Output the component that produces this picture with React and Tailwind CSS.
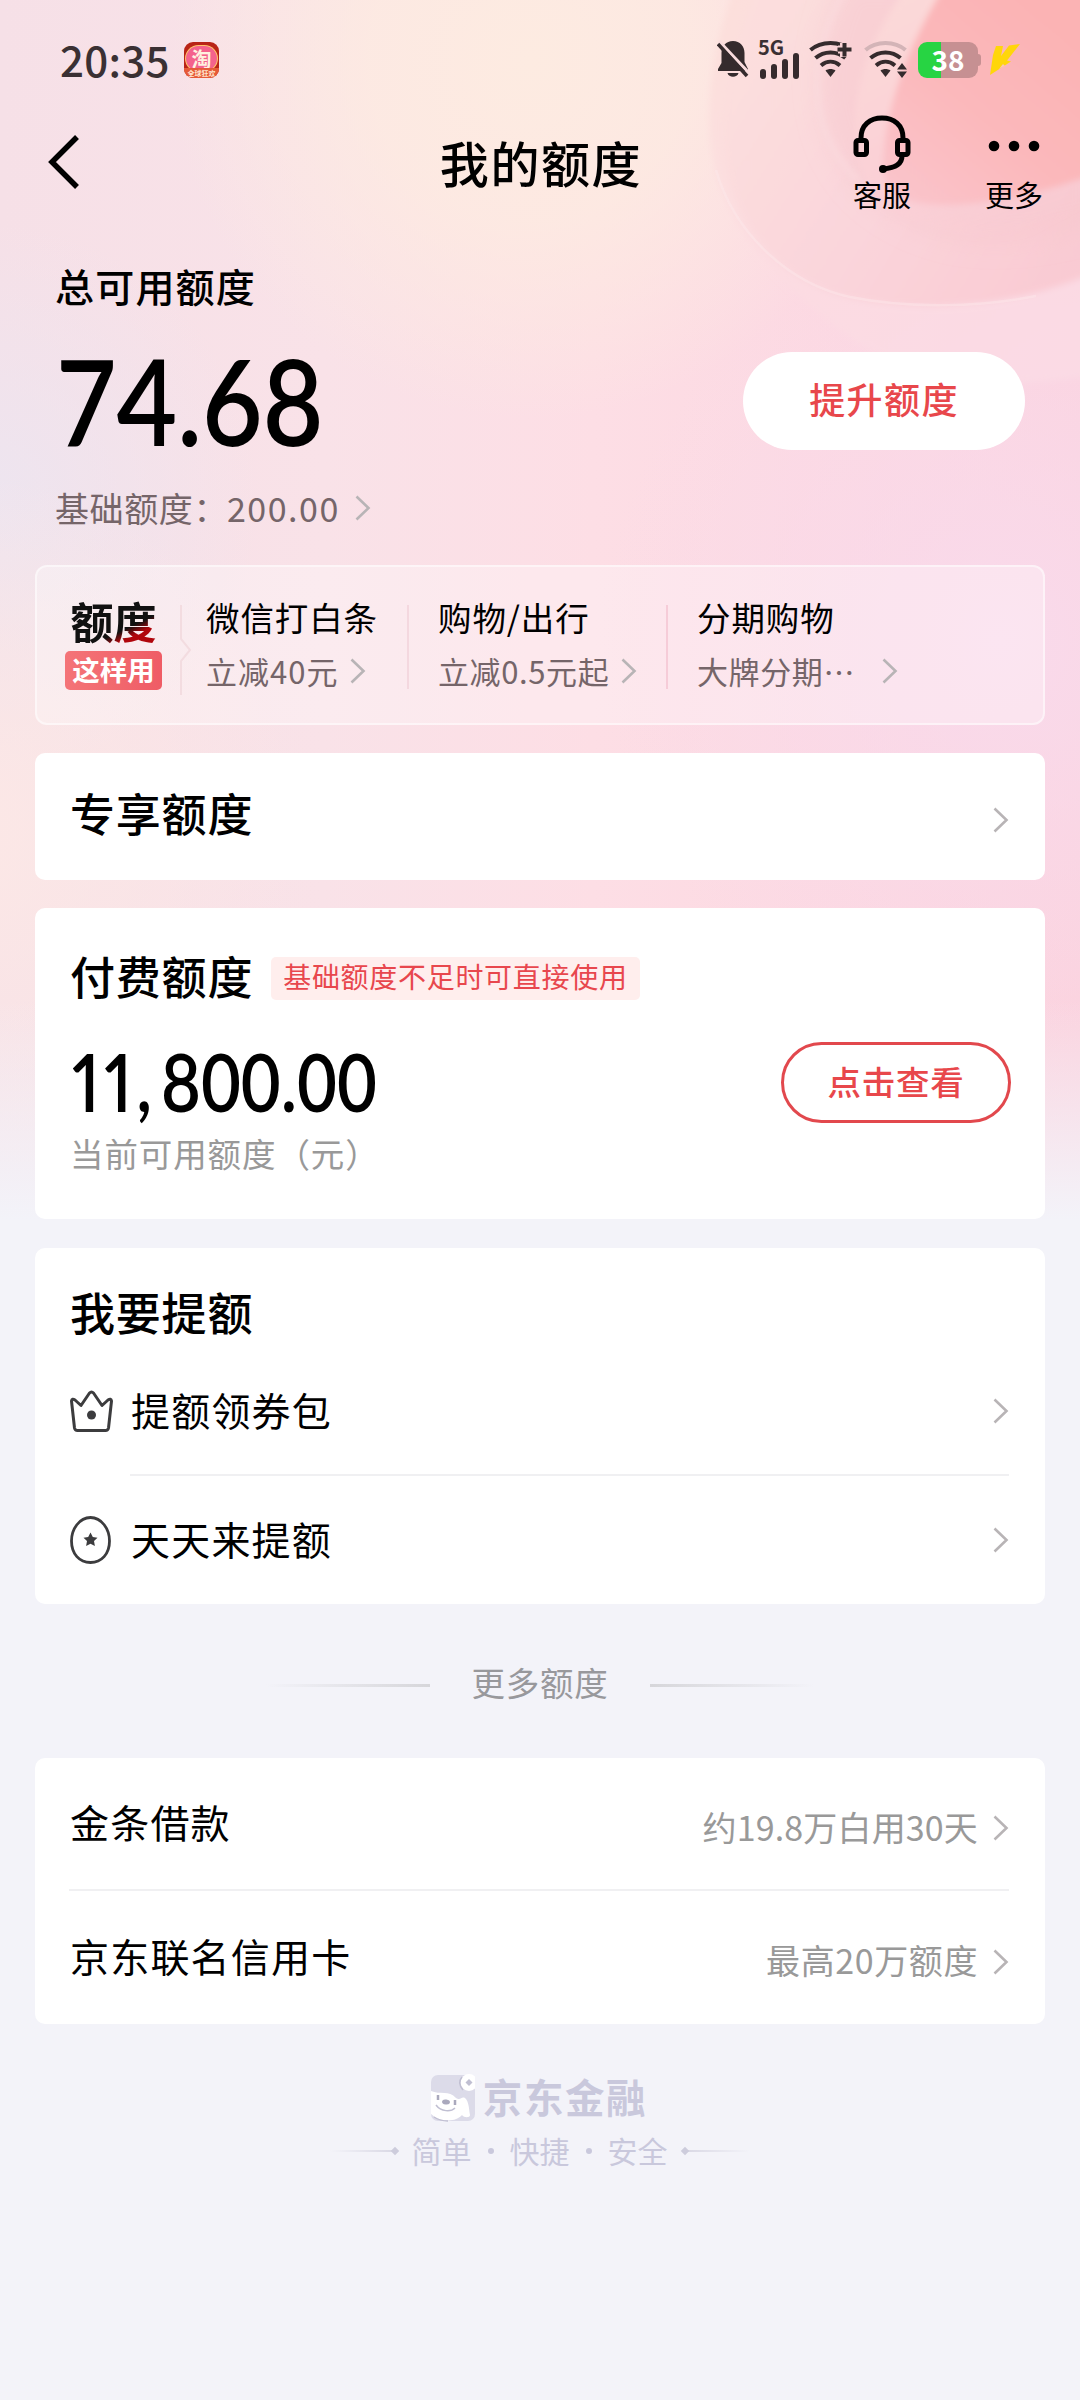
import React from "react";

function Chevron({ className = "" }) {
  return (
    <svg viewBox="0 0 16 26" fill="none" strokeWidth="2.6" className={"h-[26px] w-4 shrink-0 stroke-[#b8b4b6] " + className}>
      <path d="M1.5 1.5L13.5 13L1.5 24.5" />
    </svg>
  );
}

function Backdrop() {
  return (
    <svg className="absolute inset-0 h-[1250px] w-[1080px]" viewBox="0 0 1080 1250" fill="none" aria-hidden="true">
      <defs>
        <radialGradient id="cream" gradientUnits="userSpaceOnUse" cx="530" cy="60" r="360">
          <stop offset="0" stopColor="#fdebe1" />
          <stop offset="0.45" stopColor="#fdebe1" stopOpacity="0.8" />
          <stop offset="1" stopColor="#fdebe1" stopOpacity="0" />
        </radialGradient>
        <radialGradient id="lavender" gradientUnits="userSpaceOnUse" cx="-20" cy="500" r="280">
          <stop offset="0" stopColor="#ede5f0" />
          <stop offset="1" stopColor="#ede5f0" stopOpacity="0" />
        </radialGradient>
        <radialGradient id="peach" gradientUnits="userSpaceOnUse" cx="-40" cy="830" r="360">
          <stop offset="0" stopColor="#fce8e6" />
          <stop offset="1" stopColor="#fce8e6" stopOpacity="0" />
        </radialGradient>
        <radialGradient id="orchid" gradientUnits="userSpaceOnUse" cx="1000" cy="640" r="400">
          <stop offset="0" stopColor="#f9daeb" />
          <stop offset="1" stopColor="#f9daeb" stopOpacity="0" />
        </radialGradient>
        <linearGradient id="base" x1="0" y1="0" x2="1" y2="0">
          <stop offset="0" stopColor="#f6e0e7" />
          <stop offset="0.3" stopColor="#f9e2e8" />
          <stop offset="0.55" stopColor="#fddee5" />
          <stop offset="1" stopColor="#fbd3df" />
        </linearGradient>
        <linearGradient id="outer" gradientUnits="userSpaceOnUse" x1="720" y1="0" x2="1000" y2="380">
          <stop offset="0" stopColor="#fcddd9" />
          <stop offset="0.5" stopColor="#fcdce1" />
          <stop offset="1" stopColor="#fbdce5" />
        </linearGradient>
        <linearGradient id="shell" gradientUnits="userSpaceOnUse" x1="740" y1="60" x2="1060" y2="260">
          <stop offset="0" stopColor="#fcdedd" />
          <stop offset="0.5" stopColor="#fad3d9" />
          <stop offset="1" stopColor="#f9c6ce" />
        </linearGradient>
        <linearGradient id="rim" gradientUnits="userSpaceOnUse" x1="870" y1="0" x2="1000" y2="250">
          <stop offset="0" stopColor="#fcdbd9" />
          <stop offset="0.6" stopColor="#fbd0d6" />
          <stop offset="1" stopColor="#fad0d9" stopOpacity="0" />
        </linearGradient>
        <linearGradient id="disc" gradientUnits="userSpaceOnUse" x1="1060" y1="20" x2="900" y2="210">
          <stop offset="0" stopColor="#fbb3b4" />
          <stop offset="0.5" stopColor="#fbb8bb" />
          <stop offset="1" stopColor="#fac5cc" />
        </linearGradient>
        <linearGradient id="fade" x1="0" y1="0" x2="0" y2="1">
          <stop offset="0" stopColor="#f3f3f9" stopOpacity="0" />
          <stop offset="1" stopColor="#f3f3f9" />
        </linearGradient>
        <filter id="soft" x="-10%" y="-10%" width="120%" height="120%">
          <feGaussianBlur stdDeviation="3" />
        </filter>
        <filter id="softer" x="-20%" y="-20%" width="140%" height="140%">
          <feGaussianBlur stdDeviation="12" />
        </filter>
      </defs>
      <rect width="1080" height="1250" fill="url(#base)" />
      <rect width="1080" height="1250" fill="url(#cream)" />
      <rect width="1080" height="1250" fill="url(#lavender)" />
      <rect width="1080" height="1250" fill="url(#peach)" />
      <rect width="1080" height="1250" fill="url(#orchid)" />
      <g filter="url(#soft)">
        <path d="M738 -20C712 40 700 120 718 180C740 250 800 300 860 345C930 385 1020 390 1100 374V-20Z" fill="url(#outer)" fillOpacity="0.75" />
        <path d="M760 -20C726 60 714 130 732 190C748 242 790 285 850 298C930 315 1030 303 1100 270V-20Z" fill="url(#shell)" fillOpacity="0.75" />
      </g>
      <path d="M845 -20C790 90 820 210 960 240C1010 246 1050 240 1100 225V-20Z" fill="#f8c8ce" fillOpacity="0.5" filter="url(#softer)" />
      <path d="M845 -10C806 60 806 130 858 180" stroke="#fbdde0" strokeWidth="3" filter="url(#soft)" />
      <g filter="url(#soft)">
        <path d="M912 -20C858 50 838 130 870 190C900 235 1000 250 1100 220V-20Z" fill="url(#rim)" fillOpacity="0.9" />
        <path d="M948 -20C905 50 885 110 883 165C884 195 900 204 945 205C1000 204 1050 190 1100 172V-20Z" fill="url(#disc)" />
      </g>
      <path d="M716 170C735 235 790 284 850 297C910 309 980 307 1036 296" stroke="#fde8ec" strokeOpacity="0.45" strokeWidth="2.500" />
      <rect y="1000" width="1080" height="220" fill="url(#fade)" />
      <rect y="1219" width="1080" height="31" fill="#f3f3f9" />
    </svg>
  );
}

function MutedBell() {
  return (
    <svg viewBox="0 0 32 40" className="h-10 w-8 text-[#352b2d]">
      <path fill="currentColor" d="M16 1C23 1 27.500 6 27.500 13V22L31 29V31H1V29L4.500 23V13C4.500 6 9 1 16 1ZM10.500 33H21.500C20.500 38 11.500 38 10.500 33Z" />
      <path d="M2 1L32 33" stroke="#f9dcdd" strokeWidth="3" />
      <path d="M1 4L30 36" stroke="currentColor" strokeWidth="3.500" />
    </svg>
  );
}

function Wifi({ faded, plus }) {
  return (
    <svg viewBox="0 0 44 40" fill="none" stroke="#352b2d" strokeWidth="4" className="h-10 w-11 overflow-visible">
      <path d="M1.500 10C12 0.500 31 0.500 41.500 10" stroke={faded ? "#d3b4b7" : "#352b2d"} />
      <path d="M6.500 18C15 10.500 28 10.500 36.500 18" />
      <path d="M12 25.500C18 20.500 25 20.500 31 25.500" />
      <path d="M16.500 30.500C19.500 28.500 23.500 28.500 26.500 30.500L21.500 37Z" fill="#352b2d" stroke="none" />
      {plus && <path d="M35 3V17M29 9.500H43" stroke="#f9d2d5" strokeWidth="8" />}
      {plus && <path d="M35.500 3V16.500M28.500 9.500H42.500" />}
      {faded && <path d="M38 23L43 29.500H33ZM38 38L43 31.500H33Z" fill="#352b2d" stroke="none" />}
    </svg>
  );
}

function StatusBar() {
  return (
    <div className="flex h-[120px] items-center pl-[60px] text-[#3a3033]">
      <span className="w-[124px] pb-[2px] text-[42px] leading-[42px] font-medium tracking-[0.300px]">20:35</span>
      <div className="relative flex h-9 w-[35px] flex-col items-center overflow-hidden rounded-[9px] bg-[#b92416]">
        <div className="mt-1 flex h-[25px] w-[31px] items-center justify-center rounded-full bg-[#f4628c] ring-1 ring-[#ffc46a]">
          <span className="text-[20px] leading-5 font-bold text-[#fff1df]">淘</span>
        </div>
        <span className="absolute bottom-0 w-full bg-[#e65a38] text-center text-[7px] leading-[10px] font-bold whitespace-nowrap text-[#ffe6cf]">全球狂欢</span>
      </div>
      <div className="ml-[498px] flex h-10 items-center">
        <MutedBell />
        <div className="relative ml-[9px] h-10 w-[44px]">
          <span className="absolute top-0 left-0 text-[20px] leading-[14px] font-bold">5G</span>
          <div className="flex h-[39px] items-end gap-[5px] pl-[2px]">
            <i className="h-2.5 w-1.5 rounded-sm bg-[#352b2d]" />
            <i className="h-[15px] w-1.5 rounded-sm bg-[#352b2d]" />
            <i className="h-[20px] w-1.5 rounded-sm bg-[#352b2d]" />
            <i className="h-[26px] w-1.5 rounded-sm bg-[#352b2d]" />
          </div>
        </div>
        <div className="ml-[7px]"><Wifi plus /></div>
        <div className="ml-[11px]"><Wifi faded /></div>
        <div className="ml-[10px] flex h-9 w-[60px] items-center justify-center rounded-[9px] bg-[linear-gradient(90deg,#27d443_38%,#c69092_38%)] text-[28px] leading-9 font-bold text-white">
          <span className="-mt-[3px]">38</span>
        </div>
        <i className="h-3 w-[3px] rounded-r-sm bg-[#c69092]" />
        <svg viewBox="0 0 30 32" className="ml-[9px] h-8 w-[30px]" fill="#ffd60a">
          <path d="M6 2H13L11 12L19 1.500L30 0L17 16.500L21 17.500L0 31L3 11Z" />
          <path d="M13 20L9 25L15 22Z" fill="#fbc5b5" />
        </svg>
      </div>
    </div>
  );
}

function NavBar() {
  return (
    <header className="grid h-[120px] grid-cols-3 pl-12">
      <svg viewBox="0 0 32 54" fill="none" stroke="#000" strokeWidth="5.500" className="mt-[15px] h-[54px] w-8">
        <path d="M29 2L4 27L29 52" />
      </svg>
      <h1 className="-ml-[46px] pt-[15px] text-center text-[49px] leading-[54px] font-medium tracking-[1.6px] whitespace-nowrap">我的额度</h1>
      <div className="flex justify-end pr-[36px] text-[29px] leading-[36px]">
        <div className="flex w-[60px] flex-col items-center">
          <svg viewBox="0 0 58 60" fill="none" stroke="#000" strokeWidth="5" className="-mt-[5px] h-[60px] w-[58px]">
            <path d="M8 24V23C8 10 17 3 29 3S50 10 50 23V24" />
            <rect x="3" y="25.500" width="10.500" height="14" rx="2" />
            <rect x="44.500" y="25.500" width="10.500" height="14" rx="2" />
            <path d="M49 41C49 49 42 53 30 54" />
            <circle cx="30" cy="54" r="4" fill="#000" stroke="none" />
          </svg>
          <span className="mt-px whitespace-nowrap">客服</span>
        </div>
        <div className="ml-[72px] flex w-[60px] flex-col items-center">
          <svg viewBox="0 0 52 12" className="mt-5 h-3 w-[52px]">
            <circle cx="6" cy="6" r="5.300" /><circle cx="26" cy="6" r="5.300" /><circle cx="46" cy="6" r="5.300" />
          </svg>
          <span className="mt-[24px] whitespace-nowrap">更多</span>
        </div>
      </div>
    </header>
  );
}

function Summary() {
  return (
    <section className="flex h-[325px] items-start justify-between pr-[55px] pl-[55px]">
      <div className="pt-[25px]">
        <h2 className="h-[46px] text-[39px] leading-[40px] font-medium tracking-[1.2px]">总可用额度</h2>
        <div className="mt-[30px] h-[118px] origin-left scale-x-[0.88] pl-px font-[Lato] text-[119px] leading-[118px] font-semibold">74.68</div>
        <div className="mt-[29px] flex h-[40px] items-center text-[34px] leading-[34px] tracking-[0.6px] text-[#756569]">
          <span>基础额度：</span>
          <span className="-ml-px tracking-[1.500px]">200.00</span>
          <Chevron className="ml-[15px]" />
        </div>
      </div>
      <button className="mt-[112px] h-[98px] w-[282px] rounded-full bg-white pb-1.5 text-[36px] leading-[36px] font-medium tracking-[1.4px] text-[#e8474b]">提升额度</button>
    </section>
  );
}

function Offer({ title, note, className, chevron = "ml-[13px]" }) {
  return (
    <div className={"flex flex-col whitespace-nowrap " + className}>
      <span className="text-[33.500px] leading-[40px] tracking-[0.9px]">{title}</span>
      <span className="mt-[14px] flex items-center text-[31px] leading-[40px] tracking-[0.6px] text-[#756569]">
        {note}
        <Chevron className={chevron} />
      </span>
    </div>
  );
}

function Offers() {
  return (
    <section className="flex h-[160px] rounded-[12px] border-2 border-white/50 bg-white/30 pt-[30px]">
      <div className="ml-[28px] flex w-[97px] flex-col items-center">
        <span className="-mt-px bg-[linear-gradient(155deg,#111_66%,#b0060c_78%)] bg-clip-text text-[43px] leading-[48px] font-bold text-transparent">额度</span>
        <span className="mt-[7px] flex h-[39px] w-full items-center justify-center rounded-[5px] bg-linear-to-r from-[#f47478] to-[#ef5c65] pb-1 text-[27.500px] leading-[30px] font-bold text-white">这样用</span>
      </div>
      <svg viewBox="0 0 12 90" fill="none" stroke="#f3dce0" strokeWidth="2" className="mt-[8px] ml-[18px] h-[90px] w-3">
        <path d="M1 0V34L10 45L1 56V90" />
      </svg>
      <Offer className="ml-[14px] w-[201px]" title="微信打白条" note={<span className="tracking-[1px]">立减40元</span>} chevron="ml-[12px]" />
      <i className="mt-[8px] h-[84px] w-0.5 bg-[#f4d8df]" />
      <Offer className="ml-[29px] w-[228px]" title="购物/出行" note="立减0.5元起" chevron="ml-[12px]" />
      <i className="mt-[8px] h-[84px] w-0.5 bg-[#f6ccd8]" />
      <Offer className="ml-[29px]" title="分期购物" note="大牌分期⋯" chevron="ml-[27px]" />
    </section>
  );
}

function Card({ className = "", children }) {
  return <section className={"rounded-[10px] bg-white " + className}>{children}</section>;
}

function CrownIcon() {
  return (
    <svg viewBox="0 0 44 48" fill="none" stroke="#3c3c3e" strokeWidth="3" strokeLinejoin="round" className="h-12 w-11">
      <path d="M1.500 14Q2 11 5 13L11 18.500L19.500 6Q21.500 4 23.500 6L32 18.500L38 13Q41 11 41.500 14L38.500 41Q38 43.500 35.500 43.500H7.500Q5 43.500 4.500 41Z" />
      <circle cx="21.500" cy="28" r="4.500" fill="#3c3c3e" stroke="none" />
    </svg>
  );
}

function EggIcon() {
  return (
    <svg viewBox="0 0 44 48" fill="none" className="h-12 w-11">
      <path d="M20.500 1.500C31.500 1.500 39.500 13 39.500 25C39.500 38 31.500 46.500 20.500 46.500S1.500 38 1.500 25C1.500 13 9.500 1.500 20.500 1.500Z" stroke="#3c3c3e" strokeWidth="2.800" />
      <path d="M20.500 16.500L22.800 21L27.500 21.700L24 25.100L24.900 30L20.500 27.700L16.100 30L17 25.100L13.500 21.700L18.200 21Z" fill="#3c3c3e" />
    </svg>
  );
}

function RaiseRow({ icon, label, className }) {
  return (
    <div className={"flex items-center " + className}>
      <div className="w-[60px]">{icon}</div>
      <span className="flex-1 pb-[5px] pl-px text-[39px] leading-[44px] tracking-[1.200px]">{label}</span>
      <Chevron />
    </div>
  );
}

function MoreRow({ label, note, className, noteClass }) {
  return (
    <div className={"flex items-center justify-between " + className}>
      <span className="pb-[14px] pl-px text-[39px] leading-[44px] tracking-[1.200px]">{label}</span>
      <div className="flex items-center text-[34px] leading-[40px] text-[#999]">
        <span className={"pb-[3px] " + noteClass}>{note}</span>
        <Chevron className="ml-[15px]" />
      </div>
    </div>
  );
}

function Dot() {
  return <i className="mx-[16px] mt-[2px] size-[6px] rounded-full bg-[#c9c8dc]" />;
}

function Footer() {
  return (
    <footer className="mt-[49px] flex flex-col items-center text-[#c9c8dc]">
      <div className="flex h-[50px] items-center">
        <svg viewBox="0 0 44 48" className="-ml-[2px] h-12 w-11">
          <rect x="0" y="1" width="44" height="46" rx="7" fill="#dcdbe9" />
          <path d="M0 17C9 21 18 16 25 24C30 27 30 22 34 24C38 27 38 36 39 41C39 44 33 44 31 41C26 47 15 48 5 44L0 40Z" fill="#fff" />
          <circle cx="38" cy="8.500" r="8.500" fill="#fff" />
          <path d="M38 5L41.500 8.500L38 12L34.500 8.500Z" fill="#c0bfd2" />
          <path d="M31 3Q26 9 32 16M5 31C10 38 20 38 24 34M3 43Q9 47 17 47" stroke="#c0bfd2" strokeWidth="1.500" fill="none" />
          <path d="M7 21V26M24 26V31" stroke="#aaa9bd" strokeWidth="2.500" />
          <ellipse cx="15" cy="28" rx="4" ry="2.500" fill="#aaa9bd" transform="rotate(8 15 28)" />
        </svg>
        <span className="ml-[8px] pb-[4px] text-[39.500px] leading-[44px] font-bold tracking-[1.600px] whitespace-nowrap">京东金融</span>
      </div>
      <div className="mt-[6px] -ml-px flex h-[44px] items-center">
        <i className="h-[2px] w-[62px] bg-linear-to-r from-transparent to-[#dad9e5]" />
        <i className="size-[6px] rotate-45 bg-[#cdccdc]" />
        <span className="mx-[14px] flex h-[40px] items-center pb-[2px] text-[30px] leading-[40px] whitespace-nowrap">
          <span>简单</span><Dot /><span>快捷</span><Dot /><span>安全</span>
        </span>
        <i className="size-[6px] rotate-45 bg-[#cdccdc]" />
        <i className="h-[2px] w-[62px] bg-linear-to-l from-transparent to-[#dad9e5]" />
      </div>
    </footer>
  );
}

export default function App() {
  return (
    <div className="relative h-[2400px] w-[1080px] overflow-hidden bg-[#f3f3f9] font-['Noto_Sans_CJK_SC',sans-serif] text-black">
      <Backdrop />
      <div className="relative">
        <StatusBar />
        <NavBar />
        <Summary />
        <main className="px-[35px]">
          <Offers />
          <Card className="mt-[28px] flex h-[127px] items-center justify-between pr-[36px] pl-[35px]">
            <h3 className="pb-[8px] text-[45px] leading-[50px] font-medium tracking-[0.800px]">专享额度</h3>
            <Chevron className="mt-[6px]" />
          </Card>
          <Card className="mt-[28px] h-[311px] pt-[40px] pr-[34px] pl-[35px]">
            <div className="flex h-[60px] items-center">
              <h3 className="pb-[5px] text-[45px] leading-[50px] font-medium tracking-[0.800px]">付费额度</h3>
              <span className="ml-[18px] flex h-[43px] items-center rounded-[5px] bg-[#ffeeed] px-[12px] pb-[5px] text-[28px] leading-[36px] tracking-[0.700px] text-[#e8474d]">基础额度不足时可直接使用</span>
            </div>
            <div className="flex justify-between">
              <div>
                <div className="mt-[33px] flex h-[80px] pl-[2px] font-[Lato] text-[80px] leading-[80px] font-semibold">
                  <span className="block w-[89px] origin-left scale-x-[0.86] tracking-[5px] [font-feature-settings:'pnum','kern'_0]">11,</span>
                  <span className="block origin-left scale-x-[0.86]">800.00</span>
                </div>
                <div className="mt-[12px] text-[33.500px] leading-[40px] tracking-[0.900px] text-[#999]">当前可用额度（元）</div>
              </div>
              <button className="mt-[34px] h-[81px] w-[230px] rounded-full border-[3px] border-[#e2484d] pb-1 text-[33.500px] leading-[40px] font-medium tracking-[0.800px] text-[#e8474b]">点击查看</button>
            </div>
          </Card>
          <Card className="mt-[29px] h-[356px] pt-[39px] pr-[36px] pl-[35px]">
            <h3 className="text-[45px] leading-[50px] font-medium tracking-[0.800px]">我要提额</h3>
            <RaiseRow className="mt-[28px] h-[92px]" icon={<CrownIcon />} label="提额领券包" />
            <i className="mt-[17px] ml-[60px] block h-0.5 bg-[#f0f0f2]" />
            <RaiseRow className="mt-[18px] h-[92px]" icon={<EggIcon />} label="天天来提额" />
          </Card>
          <div className="flex h-[154px] items-center justify-center gap-[42px]">
            <i className="mt-[9px] h-[3px] w-[164px] bg-linear-to-r from-transparent to-[#d6d6da]" />
            <span className="pt-[2px] text-[33.500px] leading-[40px] tracking-[0.700px] text-[#98989c]">更多额度</span>
            <i className="mt-[9px] h-[3px] w-[164px] bg-linear-to-l from-transparent to-[#d6d6da]" />
          </div>
          <Card className="h-[266px] pr-[36px] pl-[34px]">
            <MoreRow className="h-[131px] pt-[9px]" label="金条借款" note="约19.8万白用30天" noteClass="tracking-[0.150px]" />
            <i className="block h-0.5 bg-[#f0f0f2]" />
            <MoreRow className="h-[133px] pt-[8px]" label="京东联名信用卡" note="最高20万额度" noteClass="tracking-[0.600px]" />
          </Card>
          <Footer />
        </main>
      </div>
    </div>
  );
}
